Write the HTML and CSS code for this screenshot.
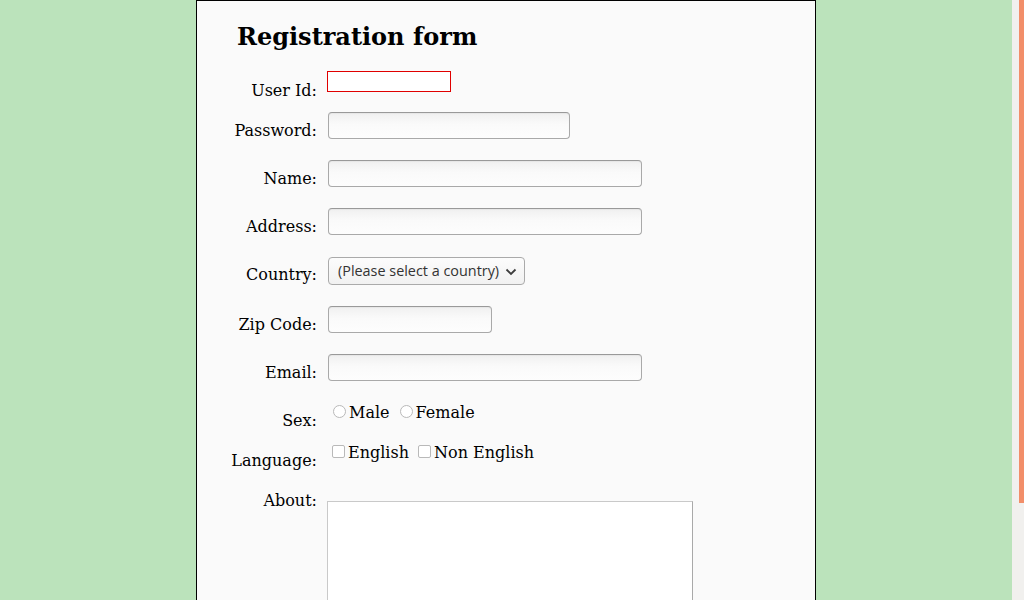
FILE: index.html
```html
<!DOCTYPE html>
<html lang="en">
<head>
<meta charset="utf-8">
<title>Registration form</title>
<link rel="stylesheet" href="styles.css">
</head>
<body>
<div class="page">
  <main class="sheet">
    <h1 class="title">Registration form</h1>
    <form class="form">
      <div class="field f-userid">
        <label class="lbl" for="userid">User Id:</label>
        <div class="ctl"><input id="userid" class="plain-input userid" type="text"></div>
      </div>
      <div class="field f-password">
        <label class="lbl" for="password">Password:</label>
        <div class="ctl"><input id="password" class="gtk-input w-242" type="password"></div>
      </div>
      <div class="field f-name">
        <label class="lbl" for="name">Name:</label>
        <div class="ctl"><input id="name" class="gtk-input w-314" type="text"></div>
      </div>
      <div class="field f-address">
        <label class="lbl" for="address">Address:</label>
        <div class="ctl"><input id="address" class="gtk-input w-314" type="text"></div>
      </div>
      <div class="field f-country">
        <label class="lbl" for="country">Country:</label>
        <div class="ctl">
          <span class="select-wrap">
            <select id="country" class="gtk-select">
              <option>(Please select a country)</option>
            </select>
            <svg class="chev" width="12" height="8" viewBox="0 0 12 8"><path d="M1.5 1.5 L6 6 L10.5 1.5" fill="none" stroke="#3c3c3c" stroke-width="1.8"/></svg>
          </span>
        </div>
      </div>
      <div class="field f-zip">
        <label class="lbl" for="zip">Zip Code:</label>
        <div class="ctl"><input id="zip" class="gtk-input w-164" type="text"></div>
      </div>
      <div class="field f-email">
        <label class="lbl" for="email">Email:</label>
        <div class="ctl"><input id="email" class="gtk-input w-314" type="text"></div>
      </div>
      <div class="field f-sex">
        <span class="lbl">Sex:</span>
        <div class="ctl inline-line">
          <input class="radio" type="radio" name="sex" id="male"><label for="male">Male</label>
          <input class="radio" type="radio" name="sex" id="female"><label for="female">Female</label>
        </div>
      </div>
      <div class="field f-lang">
        <span class="lbl">Language:</span>
        <div class="ctl inline-line">
          <input class="check" type="checkbox" id="en"><label for="en">English</label>
          <input class="check" type="checkbox" id="nonen"><label for="nonen">Non English</label>
        </div>
      </div>
      <div class="field f-about">
        <label class="lbl" for="about">About:</label>
        <div class="ctl"><textarea id="about" class="about"></textarea></div>
      </div>
    </form>
  </main>
</div>
<div class="scrollbar"><div class="thumb"></div></div>
</body>
</html>
```
FILE: styles.css
```css
html, body {
  margin: 0;
  padding: 0;
  height: 600px;
  overflow: hidden;
}
body {
  display: flex;
  background: #bbe3bb;
  font-family: "DejaVu Serif", serif;
  font-size: 16px;
  color: #000;
}
.page {
  flex: 1;
  display: flex;
  justify-content: center;
}
.sheet {
  box-sizing: border-box;
  width: 620px;
  min-height: 760px;
  background: #fafafa;
  border: 1px solid #000;
}
.title {
  margin: 22px 0 0 40px;
  font-family: "DejaVu Serif", serif;
  font-weight: bold;
  font-size: 24px;
  line-height: 28px;
}
.form {
  margin-top: 20px;
}
.field {
  display: flex;
  align-items: flex-start;
  gap: 11px;
}
.lbl {
  flex: 0 0 120px;
  text-align: right;
  line-height: 19px;
}
.ctl {
  flex: 1;
  line-height: 19px;
}
.f-userid { height: 41px; }
.f-userid .lbl { margin-top: 10px; }
.f-password { height: 48px; }
.f-password .lbl { margin-top: 9px; }
.f-name { height: 48px; }
.f-name .lbl { margin-top: 9px; }
.f-address { height: 49px; }
.f-address .lbl { margin-top: 9px; }
.f-country { height: 49px; }
.f-country .lbl { margin-top: 8px; }
.f-zip { height: 48px; }
.f-zip .lbl { margin-top: 9px; }
.f-email { height: 49px; }
.f-email .lbl { margin-top: 9px; }
.f-sex { height: 40px; }
.f-sex .lbl { margin-top: 8px; }
.f-sex .ctl { margin-top: -1px; }
.f-lang { height: 47px; }
.f-lang .lbl { margin-top: 8px; }
.f-lang .ctl { margin-top: -1px; }
.f-about .lbl { margin-top: 1px; }

input, select, textarea {
  font: inherit;
  box-sizing: border-box;
  display: block;
  margin: 0;
  outline: none;
}
.plain-input.userid {
  width: 124px;
  height: 21px;
  margin-left: -1px;
  border: 1px solid #e00000;
  background: #fff;
  padding: 0 2px;
}
.gtk-input {
  height: 27px;
  border: 1px solid #a9a9a9;
  border-top-color: #999;
  border-radius: 4px;
  background: linear-gradient(#f0f0f0, #fafafa 45%, #fdfdfd);
  box-shadow: inset 0 1px 1px rgba(0, 0, 0, 0.04);
  padding: 0 6px;
}
.w-242 { width: 242px; }
.w-314 { width: 314px; }
.w-164 { width: 164px; }

.select-wrap {
  position: relative;
  display: inline-block;
  vertical-align: top;
}
.gtk-select {
  appearance: none;
  -webkit-appearance: none;
  width: 197px;
  height: 28px;
  border: 1px solid #aaa;
  border-radius: 4px;
  background: linear-gradient(#fcfcfc, #f1f1f1);
  color: #333;
  font-family: "Open Sans", "Noto Sans", sans-serif;
  font-size: 14.4px;
  padding: 0 0 2px 9px;
}
.chev {
  position: absolute;
  right: 8px;
  top: 11px;
  pointer-events: none;
}

.inline-line {
  white-space: nowrap;
}
.inline-line input, .inline-line label {
  display: inline-block;
}
.radio {
  appearance: none;
  -webkit-appearance: none;
  width: 13px;
  height: 13px;
  margin: 3px 3px 0 5px;
  border: 1px solid #b9b9b9;
  border-radius: 50%;
  background: #fff;
  vertical-align: baseline;
}
.check {
  appearance: none;
  -webkit-appearance: none;
  width: 13px;
  height: 13px;
  margin: 3px 3px 3px 4px;
  border: 1px solid #b9b9b9;
  border-radius: 2px;
  background: #fff;
  vertical-align: -3px;
}
.about {
  width: 366px;
  height: 160px;
  margin: 11px 0 0 -1px;
  border: 1px solid #c9c9c9;
  border-right-color: #a9a9a9;
  border-bottom-color: #a9a9a9;
  background: #fff;
  resize: none;
}

.scrollbar {
  flex: 0 0 12px;
  display: flex;
  justify-content: flex-end;
  background: #f1f0ee;
}
.thumb {
  width: 5px;
  height: 503px;
  background: #f28e69;
}
```
